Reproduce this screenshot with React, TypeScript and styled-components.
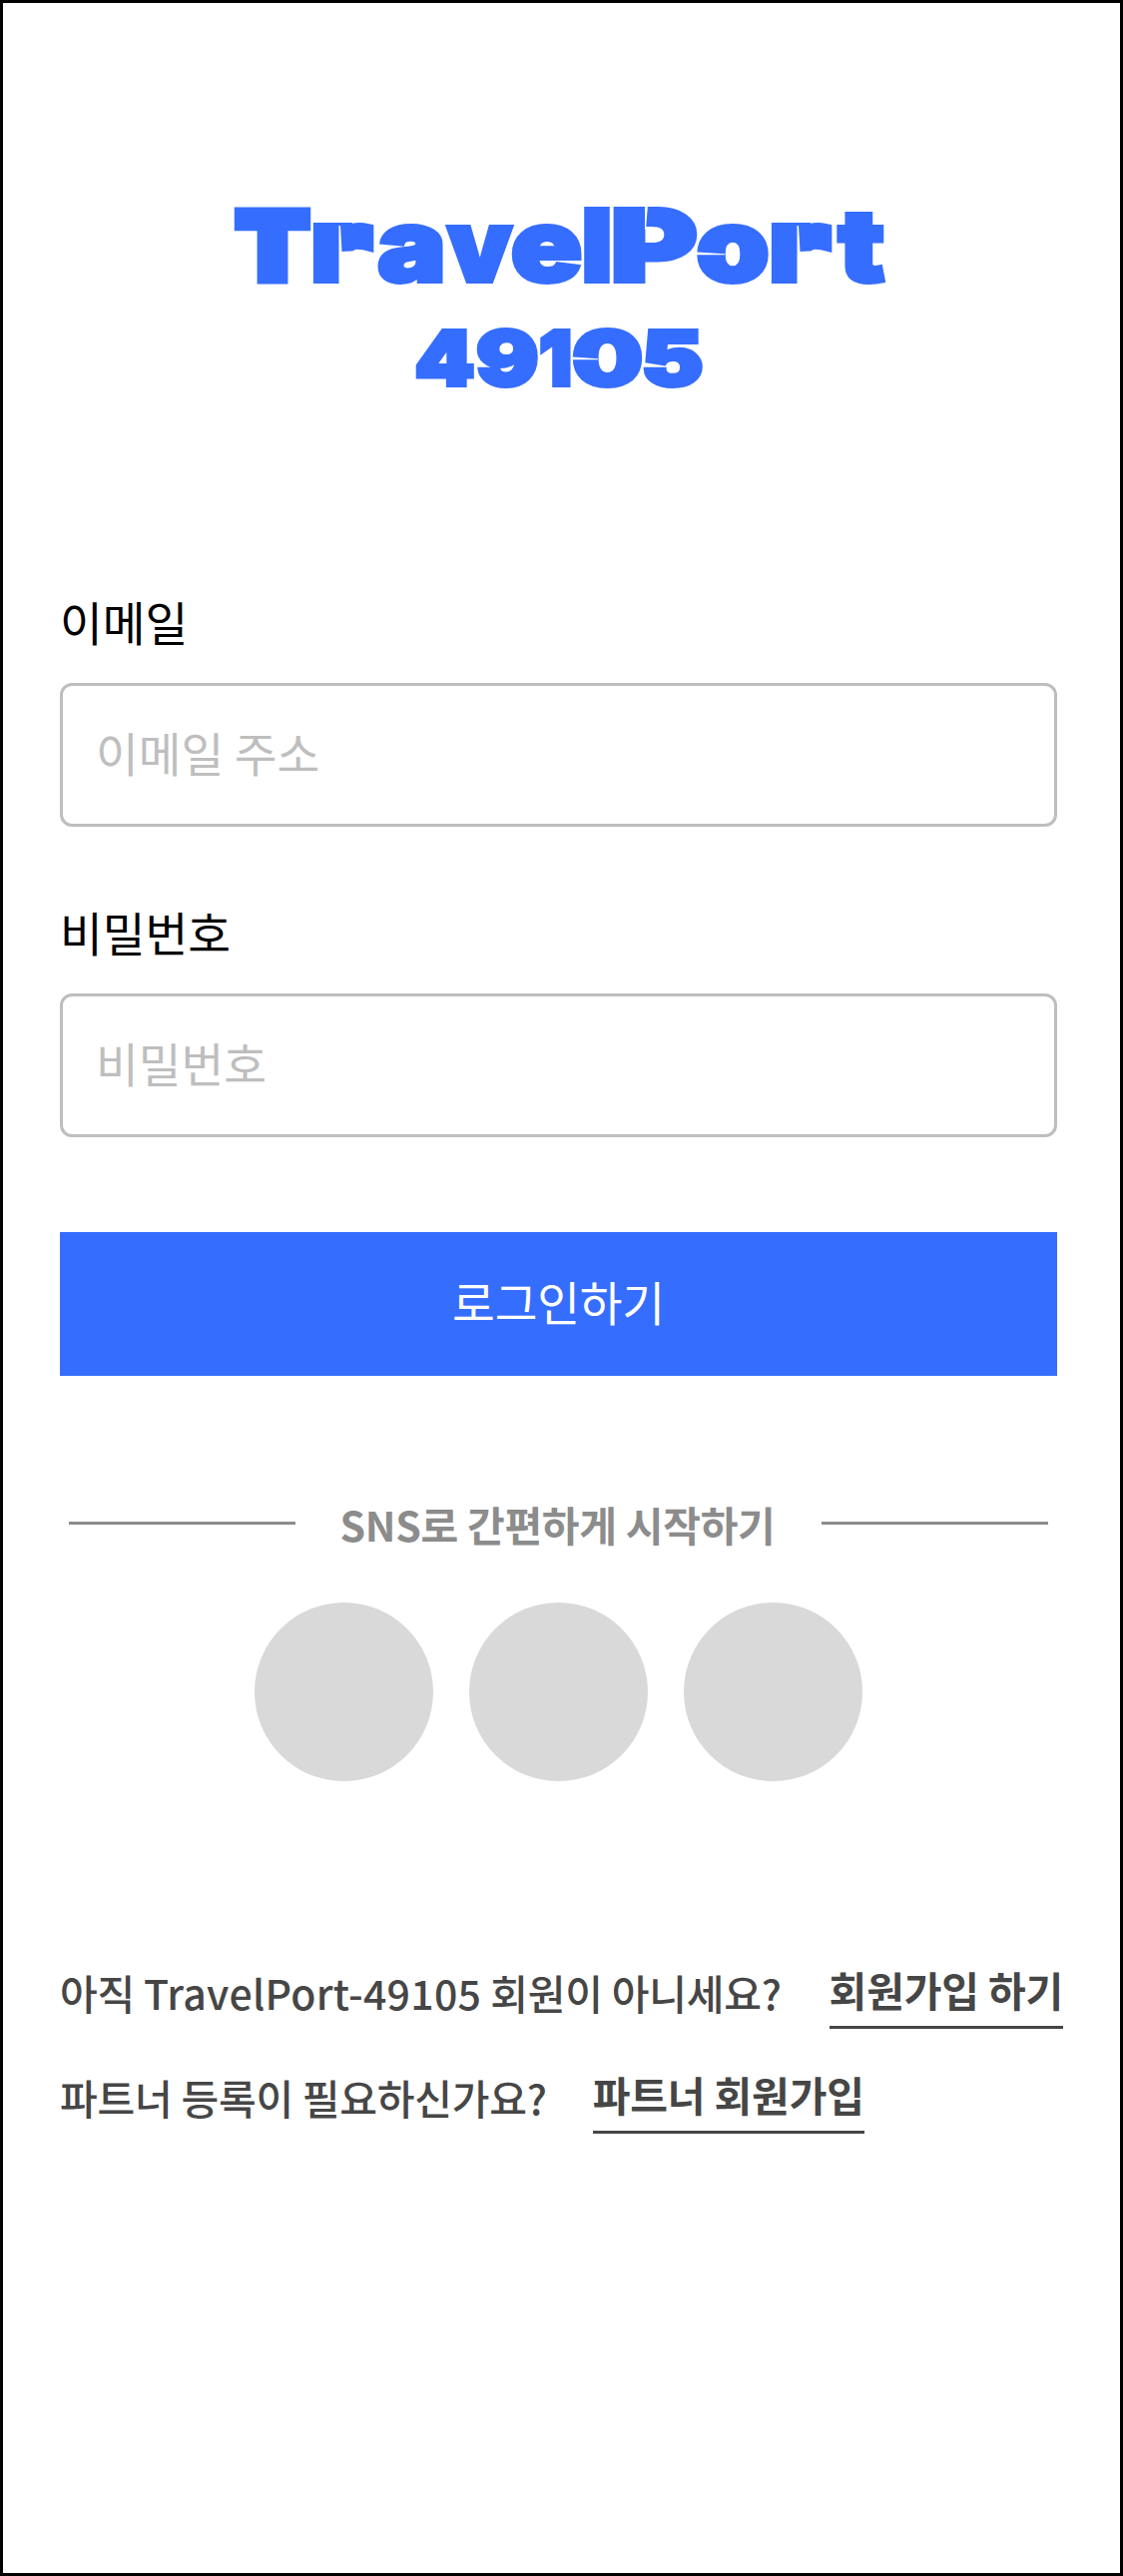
import React from "react";
import styled, { createGlobalStyle } from "styled-components";

const BLUE = "#356dff";
const KR = `"Noto Sans CJK KR", "Noto Sans", sans-serif`;

const GlobalStyle = createGlobalStyle`
  *, *::before, *::after { box-sizing: border-box; }
  body { margin: 0; background: #fff; }
`;

const Screen = styled.main`
  width: 1125px;
  height: 2580px;
  border: 3px solid #000;
  background: #fff;
  padding: 187px 57px 0;
  font-family: ${KR};
  display: flex;
  flex-direction: column;
`;

const Logo = styled.svg`
  display: block;
  width: 685px;
  height: 220px;
  margin-left: 160px;
  flex: none;
  overflow: visible;
  font-family: Inter, sans-serif;
  font-weight: 900;
`;

const Form = styled.form`
  display: flex;
  flex-direction: column;
  margin-top: 181px;
  width: 999px;
`;

const Field = styled.label`
  display: flex;
  flex-direction: column;
  height: 311px;
`;

const FieldName = styled.span`
  height: 93px;
  line-height: 61px;
  font-size: 46.5px;
  color: #000;
`;

const Input = styled.input`
  width: 100%;
  height: 144px;
  border: 3px solid #bebebe;
  border-radius: 12px;
  padding: 0 33px 7px;
  font-family: ${KR};
  font-size: 46.5px;
  color: #000;
  outline: none;
  &::placeholder { color: #bebebe; opacity: 1; }
`;

const Submit = styled.button`
  height: 144px;
  margin-top: 21px;
  border: 0;
  padding: 0 0 7px;
  background: ${BLUE};
  color: #fff;
  font-family: ${KR};
  font-size: 46.5px;
  letter-spacing: -0.2px;
`;

const Divider = styled.div`
  display: flex;
  align-items: center;
  justify-content: space-between;
  height: 60px;
  margin: 117px 9px 0;
  width: 981px;
`;

const Rule = styled.span`
  width: 227px;
  height: 3px;
  background: #8c8c8c;
`;

const DividerText = styled.span`
  font-size: 41px;
  font-weight: 700;
  line-height: 60px;
  letter-spacing: -0.28px;
  padding: 1px 2px 0 0;
  color: #8c8c8c;
  white-space: nowrap;
`;

const Socials = styled.div`
  display: flex;
  gap: 36px;
  margin: 50px 0 0 195px;
`;

const Social = styled.button`
  width: 179px;
  height: 179px;
  border: 0;
  padding: 0;
  border-radius: 50%;
  background: #d9d9d9;
`;

const Footer = styled.footer`
  display: flex;
  flex-direction: column;
  gap: 37px;
  margin-top: 180px;
`;

const FooterRow = styled.div<{ $gap: number }>`
  display: flex;
  gap: ${(p) => p.$gap}px;
  height: 68px;
  white-space: nowrap;
  color: #464646;
`;

const Question = styled.span`
  font-size: 41px;
  font-weight: 500;
  line-height: 60px;
  letter-spacing: -0.24px;
  padding-top: 1px;
`;

const Latin = styled.span`
  letter-spacing: 0.3px;
`;

const Link = styled.a`
  font-size: 41px;
  font-weight: 700;
  line-height: 57px;
  height: 68px;
  letter-spacing: -0.15px;
  border-bottom: 3px solid #464646;
`;

type Glyph = { char: string; x: number; width: number; size?: number; stroke?: number };

const nameGlyphs: Glyph[] = [
  { char: "T", x: 17, width: 72, size: 93, stroke: 9 },
  { char: "r", x: 96, width: 52, size: 89, stroke: 12 },
  { char: "a", x: 158, width: 69 },
  { char: "v", x: 228, width: 65 },
  { char: "e", x: 291.5, width: 72 },
  { char: "l", x: 362, width: 32 },
  { char: "P", x: 391, width: 88 },
  { char: "o", x: 477, width: 74 },
  { char: "r", x: 555, width: 52, size: 89, stroke: 12 },
  { char: "t", x: 619.5, width: 47 },
];

const numberGlyphs: Glyph[] = [
  { char: "4", x: 195.5, width: 60 },
  { char: "9", x: 257, width: 62.5 },
  { char: "1", x: 320, width: 33 },
  { char: "0", x: 353, width: 71 },
  { char: "5", x: 422.5, width: 62 },
];

/* thin stencil cuts through the letters */
const cuts = [
  "119.5,36 121,36 122.5,62 140,61 140,95 119.5,95",
  "426,15 429,15 427,40 426,40",
  "478,62.5 506,64.2 506,65.2 478,65.2",
  "578.5,36 580,36 581.5,62 599,61 599,95 578.5,95",
  "353.5,167.5 379,169.2 379,170.2 353.5,170.2",
];

const Word = ({ glyphs, baseline, size }: { glyphs: Glyph[]; baseline: number; size: number }) => (
  <text fill={BLUE} stroke={BLUE}>
    {glyphs.map((g, i) => {
      const stroke = g.stroke ?? 4;
      return (
        <tspan
          key={i}
          x={g.x}
          y={baseline - stroke / 2}
          fontSize={g.size ?? size}
          strokeWidth={stroke}
          textLength={g.width}
          lengthAdjust="spacingAndGlyphs"
        >
          {g.char}
        </tspan>
      );
    })}
  </text>
);

export default function App() {
  return (
    <>
      <GlobalStyle />
      <Screen>
        <Logo viewBox="0 0 685 220" role="img" aria-label="TravelPort 49105">
          <Word glyphs={nameGlyphs} baseline={94} size={101} />
          <Word glyphs={numberGlyphs} baseline={198} size={75} />
          {cuts.map((points) => (
            <polygon key={points} points={points} fill="#fff" />
          ))}
        </Logo>
        <Form onSubmit={(e) => e.preventDefault()}>
          <Field>
            <FieldName>이메일</FieldName>
            <Input type="email" placeholder="이메일 주소" />
          </Field>
          <Field>
            <FieldName>비밀번호</FieldName>
            <Input type="password" placeholder="비밀번호" />
          </Field>
          <Submit type="submit">로그인하기</Submit>
        </Form>
        <Divider>
          <Rule />
          <DividerText>SNS로 간편하게 시작하기</DividerText>
          <Rule />
        </Divider>
        <Socials>
          <Social type="button" />
          <Social type="button" />
          <Social type="button" />
        </Socials>
        <Footer>
          <FooterRow $gap={48}>
            <Question>
              아직 <Latin>TravelPort-49105</Latin> 회원이 아니세요?
            </Question>
            <Link>회원가입 하기</Link>
          </FooterRow>
          <FooterRow $gap={46}>
            <Question>파트너 등록이 필요하신가요?</Question>
            <Link>파트너 회원가입</Link>
          </FooterRow>
        </Footer>
      </Screen>
    </>
  );
}
